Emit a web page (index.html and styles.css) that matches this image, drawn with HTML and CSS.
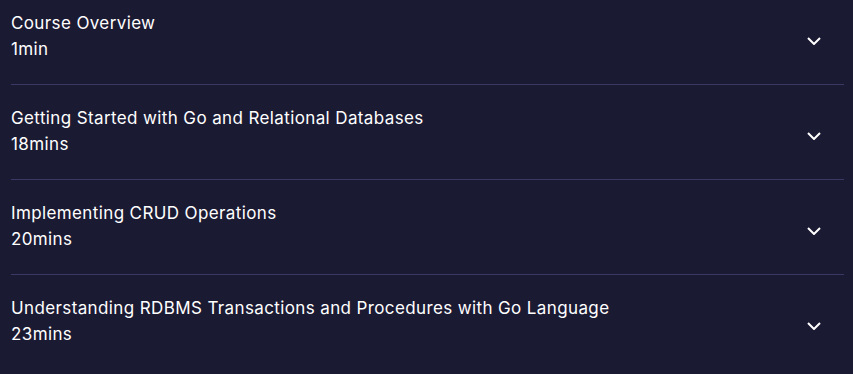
FILE: index.html
```html
<!DOCTYPE html>
<html lang="en">
<head>
    <meta charset="UTF-8">
    <title>Course Contents</title>
    <link rel="stylesheet" href="styles.css">
</head>
<body>
    <div class="modules">
        <div class="module">
            <div class="module-info">
                <div class="module-title">Course Overview</div>
                <div class="module-time">1min</div>
            </div>
            <svg class="chevron" viewBox="0 0 14 8"><path d="M1 1l6 6 6-6"/></svg>
        </div>
        <div class="module">
            <div class="module-info">
                <div class="module-title">Getting Started with Go and Relational Databases</div>
                <div class="module-time">18mins</div>
            </div>
            <svg class="chevron" viewBox="0 0 14 8"><path d="M1 1l6 6 6-6"/></svg>
        </div>
        <div class="module">
            <div class="module-info">
                <div class="module-title">Implementing CRUD Operations</div>
                <div class="module-time">20mins</div>
            </div>
            <svg class="chevron" viewBox="0 0 14 8"><path d="M1 1l6 6 6-6"/></svg>
        </div>
        <div class="module">
            <div class="module-info">
                <div class="module-title">Understanding RDBMS Transactions and Procedures with Go Language</div>
                <div class="module-time">23mins</div>
            </div>
            <svg class="chevron" viewBox="0 0 14 8"><path d="M1 1l6 6 6-6"/></svg>
        </div>
    </div>
</body>
</html>
```

FILE: styles.css
```css
* {
    box-sizing: border-box;
}
body {
    margin: 0;
    padding: 0 9px 0 11px;
    background: #1b1a33;
    color: #ffffff;
    font-family: Inter, "Open Sans", Arial, sans-serif;
    font-size: 17px;
    letter-spacing: 0.38px;
}
.module {
    display: flex;
    align-items: center;
    padding: 20px 0 22px;
    border-bottom: 1px solid #3c3866;
}
.module:first-child {
    padding-top: 10px;
}
.module:last-child {
    border-bottom: none;
}
.module-info {
    flex: 1;
    line-height: 26px;
}
.chevron {
    width: 14px;
    height: 8px;
    margin: 10px 23px 0 0;
    fill: none;
    stroke: #ffffff;
    stroke-width: 2;
}
```
